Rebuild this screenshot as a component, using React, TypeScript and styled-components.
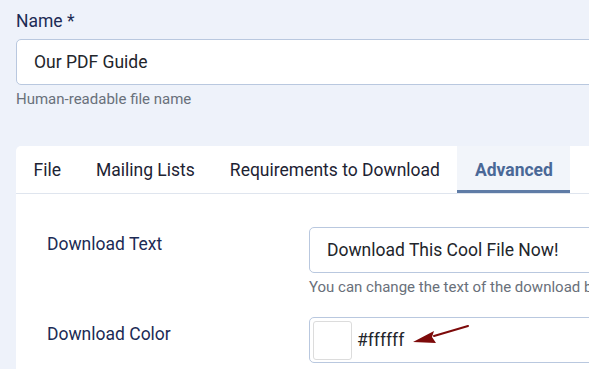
import React from 'react';
import styled, { createGlobalStyle } from 'styled-components';

const colors = {
    page: '#eef2fa',
    label: '#1c2b55',
    text: '#22252b',
    help: '#69707a',
    border: '#b9c8df',
    tabLine: '#dfe5ee',
    activeBg: '#f2f5fa',
    activeText: '#4a6897',
    activeBar: '#5f7ca6',
    arrow: '#7d0a0a'
};

const GlobalStyle = createGlobalStyle`
    body {
        margin: 0;
        background: ${colors.page};
        font-family: Roboto, "Liberation Sans", sans-serif;
        overflow: hidden;
    }
`;

interface TabProps {
    $active?: boolean;
}

export default function App(): JSX.Element {
    const tabs = ['File', 'Mailing Lists', 'Requirements to Download', 'Advanced'];

    return (
        <Page>
            <GlobalStyle />
            <Field>
                <TopLabel>Name *</TopLabel>
                <TextInput>Our PDF Guide</TextInput>
                <Help>Human-readable file name</Help>
            </Field>

            <Card>
                <TabBar>
                    {tabs.map(t => (
                        <Tab key={t} $active={t === 'Advanced'}>{t}</Tab>
                    ))}
                </TabBar>

                <CardBody>
                    <Row>
                        <RowLabel>Download Text</RowLabel>
                        <div>
                            <TextInput>Download This Cool File Now!</TextInput>
                            <Help>You can change the text of the download button here.</Help>
                        </div>
                    </Row>
                    <Row>
                        <RowLabel>Download Color</RowLabel>
                        <ColorInput>
                            <Swatch />
                            <ColorValue>#ffffff</ColorValue>
                            <Arrow width="70" height="30" viewBox="0 0 70 30">
                                <line x1="56" y1="1" x2="22" y2="11" stroke={colors.arrow} strokeWidth="2" strokeLinecap="round" />
                                <polygon points="1,17 22,6 20,12 24,18" fill={colors.arrow} />
                            </Arrow>
                        </ColorInput>
                    </Row>
                </CardBody>
            </Card>
        </Page>
    );
}

// ============================== Top field ==============================

const Page = styled.div`
    padding: 9px 0 0 16px;
    width: 900px;
`;

const Field = styled.div`
    display: flex;
    flex-direction: column;
    margin-bottom: 37px;
`;

const TopLabel = styled.label`
    font-size: 17.5px;
    line-height: 24px;
    color: ${colors.label};
    margin-bottom: 6px;
`;

const TextInput = styled.div`
    height: 46px;
    box-sizing: border-box;

    display: flex;
    align-items: center;

    padding: 0 17px;
    background: #fff;
    border: 1px solid ${colors.border};
    border-radius: 5px;

    font-size: 17.5px;
    color: ${colors.text};
`;

const Help = styled.div`
    margin-top: 4px;
    font-size: 15px;
    line-height: 20px;
    color: ${colors.help};
    white-space: nowrap;
`;

// ============================== Card ==============================

const Card = styled.div`
    background: #fff;
    border-radius: 5px 5px 0 0;
    min-height: 240px;
`;

const TabBar = styled.div`
    display: flex;
    flex-direction: row;
    height: 48px;
    box-sizing: border-box;
    border-bottom: 1px solid ${colors.tabLine};
`;

const Tab = styled.div<TabProps>`
    display: flex;
    align-items: center;
    padding: 3px 17.5px 0;
    box-sizing: border-box;

    font-size: 17.5px;
    font-weight: ${props => props.$active ? 700 : 400};
    color: ${props => props.$active ? colors.activeText : '#1d2333'};
    background: ${props => props.$active ? colors.activeBg : 'transparent'};
    border-bottom: 3px solid ${props => props.$active ? colors.activeBar : 'transparent'};
`;

const CardBody = styled.div`
    display: flex;
    flex-direction: column;
    gap: 20px;
    padding: 33px 0 0 31px;
`;

const Row = styled.div`
    display: grid;
    grid-template-columns: 262px 1fr;
    align-items: start;
`;

const RowLabel = styled.div`
    padding-top: 5px;
    font-size: 17.5px;
    line-height: 24px;
    color: ${colors.label};
`;

const ColorInput = styled(TextInput)`
    position: relative;
    padding: 0 3px;
    gap: 5px;
`;

const Swatch = styled.div`
    width: 39px;
    height: 39px;
    box-sizing: border-box;
    background: #fff;
    border: 1px solid #dcdcdc;
    border-radius: 3px;
`;

const ColorValue = styled.span`
    font-size: 17.5px;
    color: ${colors.text};
`;

const Arrow = styled.svg`
    position: absolute;
    left: 102px;
    top: 7px;
`;
